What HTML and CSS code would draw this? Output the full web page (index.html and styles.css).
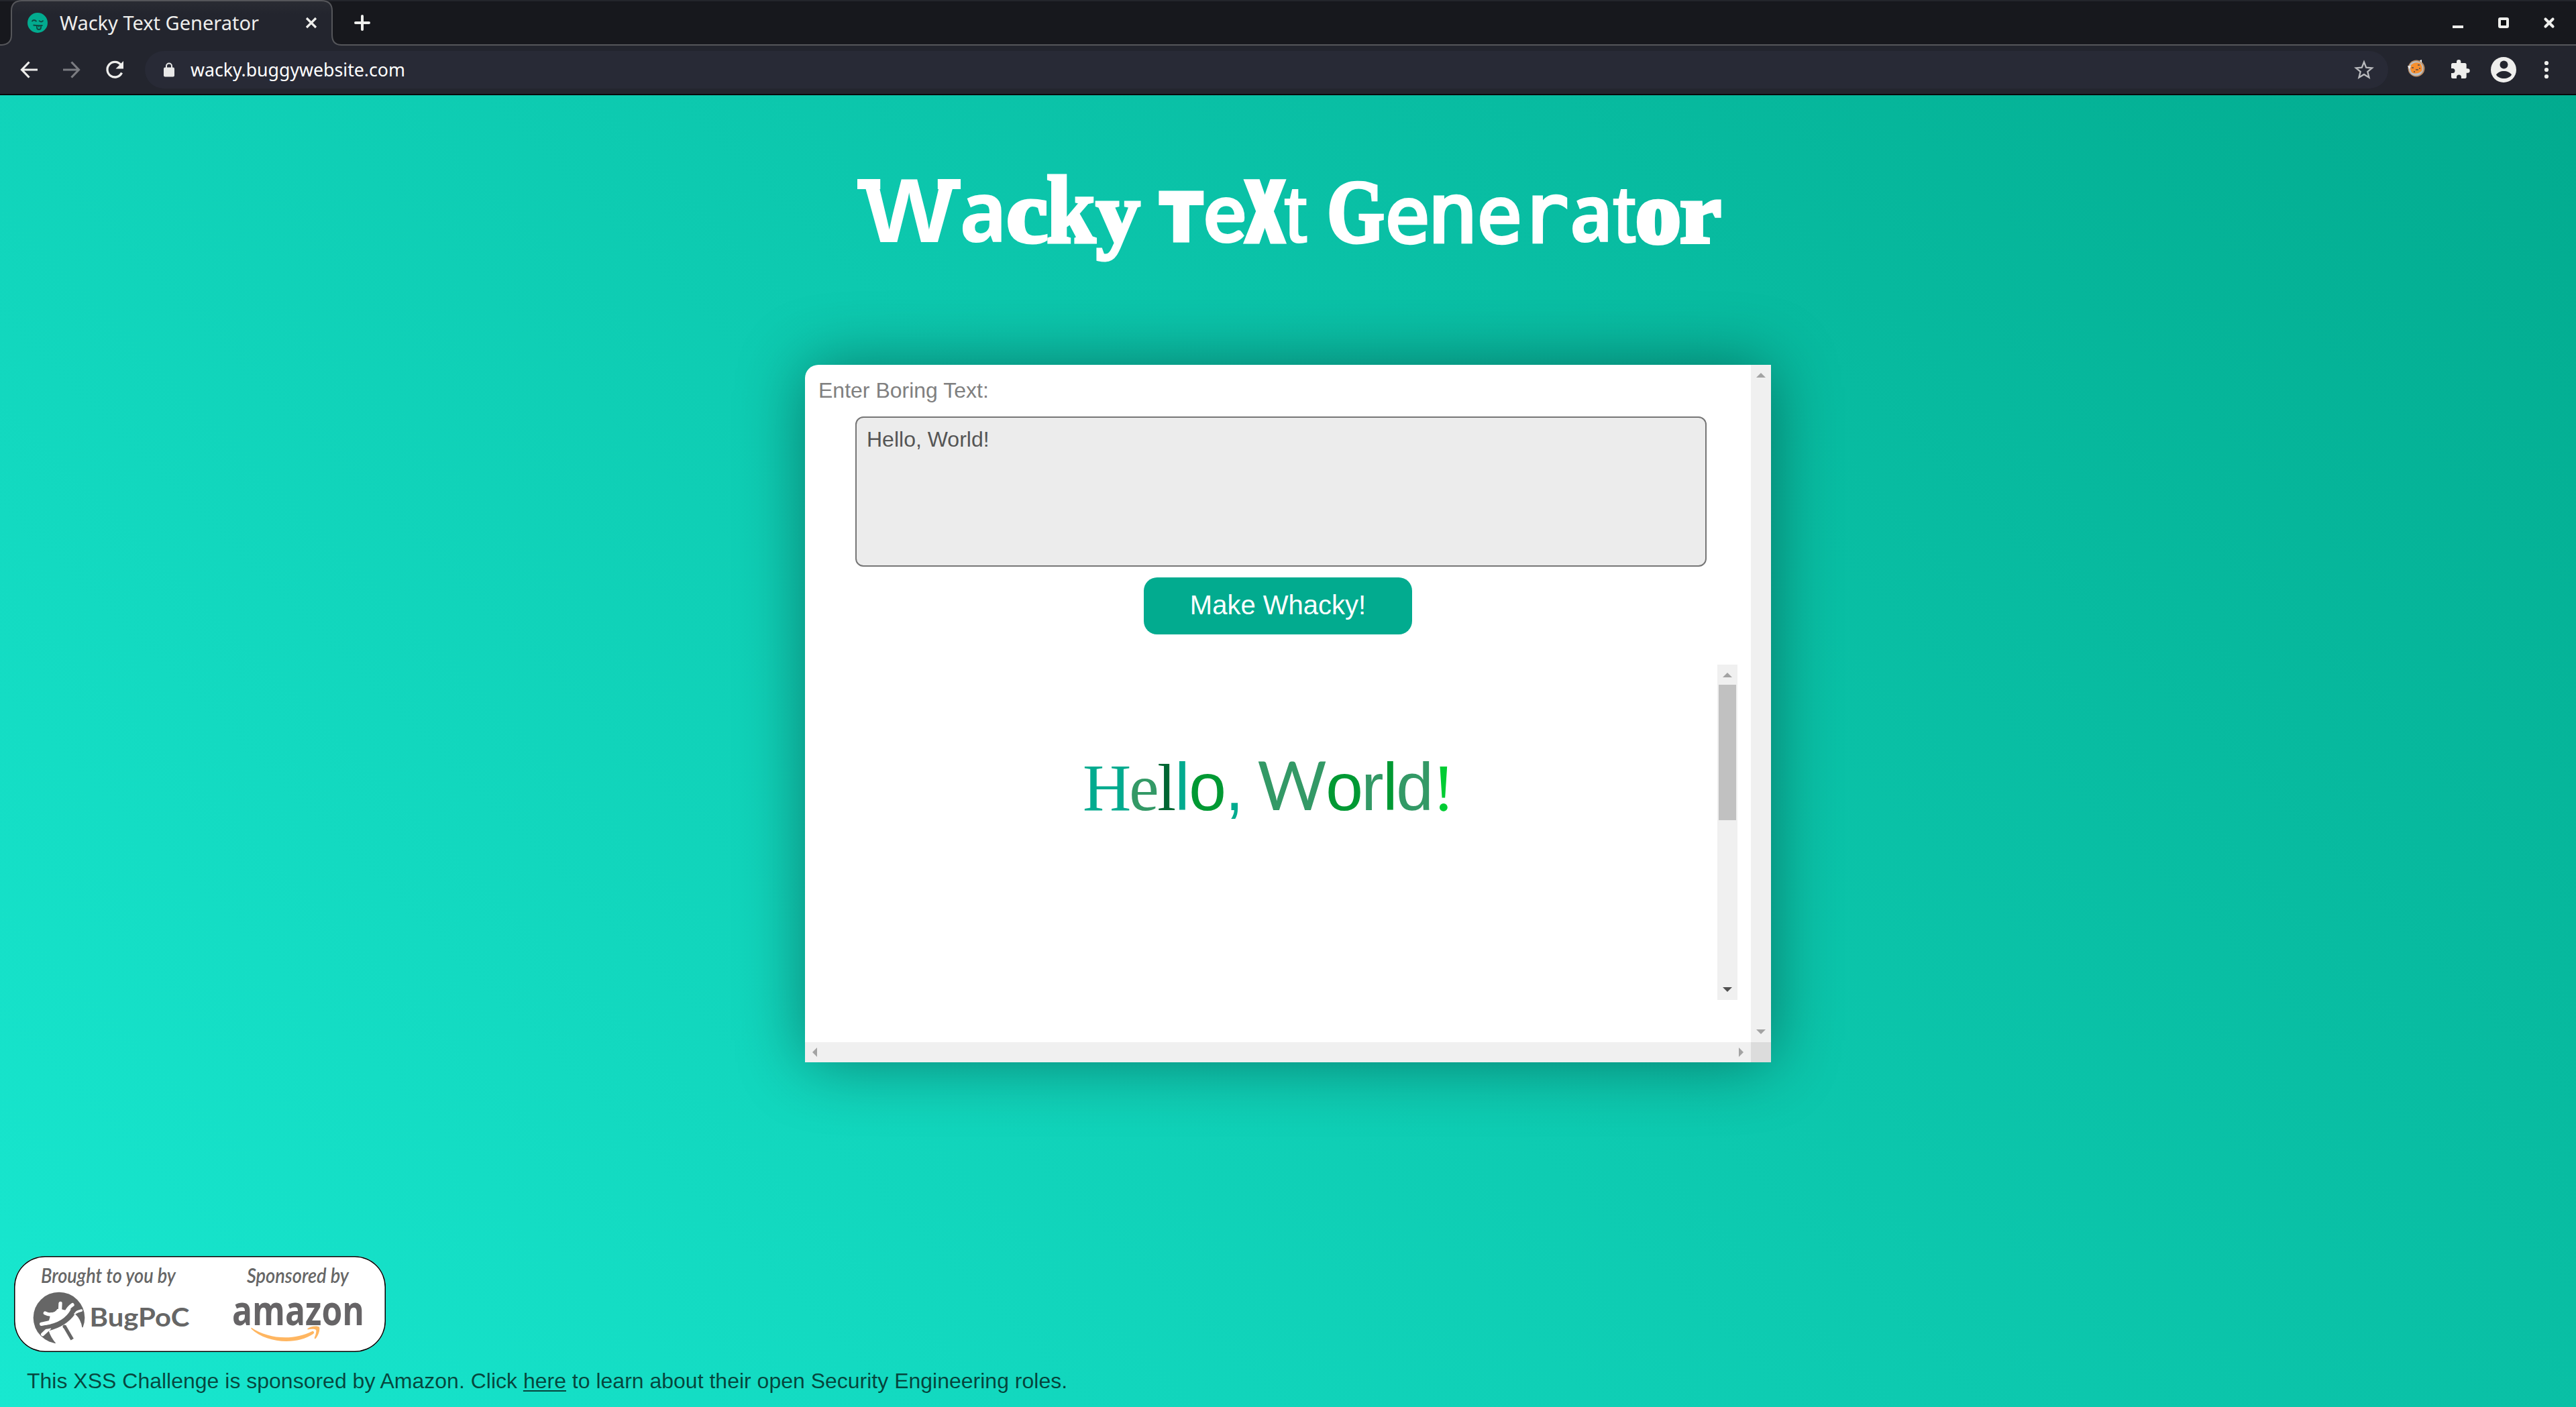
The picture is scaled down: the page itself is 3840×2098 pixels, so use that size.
FILE: index.html
```html
<!DOCTYPE html>
<html lang="en">
<head>
<meta charset="utf-8">
<title>Wacky Text Generator</title>
<link rel="stylesheet" href="styles.css">
</head>
<body>
<header class="browser">
  <div class="tabstrip">
    <svg class="tabshape" width="3840" height="68" viewBox="0 0 3840 68">
      <defs><linearGradient id="tabfill" x1="0" y1="0" x2="0" y2="1"><stop offset="0" stop-color="#2a2c33"/><stop offset=".3" stop-color="#23252e"/></linearGradient></defs>
      <path d="M0 68V67H3Q17 66 17 52V16Q17 1 33 1H479Q495 1 495 16V52Q495 67 509 67H3840V68Z" fill="url(#tabfill)"/>
      <path d="M0 67H3Q17 66 17 52V16Q17 1 33 1H479Q495 1 495 16V52Q495 67 509 67H3840" fill="none" stroke="#55565a" stroke-width="2"/>
    </svg>
    <div class="tab">
      <svg class="favicon" width="30" height="30" viewBox="0 0 30 30">
        <circle cx="15" cy="15" r="15" fill="#02ab8f"/>
        <path d="M6.5 13q3-4 7 0M17 11.500q3.500 4 6.500 0M8.500 18.500q7 1 14 .5M14 19v3q0 3 3 3t3-3v-3M17 19v2.500" fill="none" stroke="#0d4a42" stroke-width="1.800"/>
      </svg>
      <span class="tab-title">Wacky Text Generator</span>
      <svg class="tab-close" width="18" height="18" viewBox="0 0 18 18"><path d="M2 2 16 16M16 2 2 16" stroke="#eeeeec" stroke-width="3.200"/></svg>
    </div>
    <svg class="newtab" width="24" height="24" viewBox="0 0 24 24"><path d="M12 2V22M2 12H22" stroke="#eeeeec" stroke-width="4" stroke-linecap="round"/></svg>
    <svg class="winbtns" width="154" height="18" viewBox="0 0 154 18">
      <path d="M1 13H17V17H1Z" fill="#eeeeec"/>
      <rect x="71" y="3" width="12" height="12" rx="1" fill="#0c0d10" stroke="#eeeeec" stroke-width="4"/>
      <path d="M139.500 3.500 150.500 14.500M150.500 3.500 139.500 14.500" stroke="#eeeeec" stroke-width="4.200" stroke-linecap="round"/>
    </svg>
  </div>
  <div class="toolbar">
    <svg class="nav" width="160" height="32" viewBox="0 0 160 32">
      <path d="M27 16H4M14.500 4.500 3.500 16 14.500 27.500" fill="none" stroke="#eeeeec" stroke-width="3.200"/>
      <path d="M65 16H88M77.500 4.500 88.500 16 77.500 27.500" fill="none" stroke="#7b7c81" stroke-width="3.200"/>
      <path d="M152.500 20.500A11.300 11.300 0 1 1 151 8.500" fill="none" stroke="#eeeeec" stroke-width="3.300"/>
      <path d="M155 3V14.500H143.500Z" fill="#eeeeec"/>
    </svg>
    <div class="omnibox">
      <svg class="lock" width="16" height="22" viewBox="0 0 16 22"><rect y="7.500" width="16" height="14" rx="2" fill="#e8e8e8"/><path d="M4 9V5.500a4 4 0 0 1 8 0V9" fill="none" stroke="#e8e8e8" stroke-width="2"/></svg>
      <span class="url">wacky.buggywebsite.com</span>
      <svg class="star" width="30" height="30" viewBox="0 0 30 30"><path d="M15 3.500 18.200 11.600 27 12.300 20.300 17.900 22.500 26.500 15 21.900 7.500 26.500 9.700 17.900 3 12.300 11.800 11.600Z" fill="none" stroke="#b9babd" stroke-width="2.300"/></svg>
    </div>
    <svg class="cookie" width="28" height="28" viewBox="0 0 28 28">
      <circle cx="14" cy="14" r="12.500" fill="#b98b62"/><circle cx="13.500" cy="14" r="10.800" fill="#b9c0c8"/>
      <path d="M6 9Q12 3 20 6.500 24 12 22 18 14 24 7 20 4 15 6 9Z" fill="#f78f2d"/>
      <path d="M7 13h3M13 16h4M16 9h3M10 19h2M18 14h2" stroke="#7b5a44" stroke-width="2"/>
      <path d="M1 10 6 11 3 15ZM19 2l3-1v5z" fill="#f1f1f1"/>
    </svg>
    <svg class="puzzle" width="30" height="30" viewBox="0 0 30 30"><path d="M25.500 14.300H23.700V8.500A2.500 2.500 0 0 0 21.200 6H15.400V4.200A3.200 3.200 0 0 0 9 4.200V6H3.500A2.500 2.500 0 0 0 1 8.500V14H3A3.500 3.500 0 0 1 3 21H1V26.500A2.500 2.500 0 0 0 3.500 29H9V27A3.500 3.500 0 0 1 16 27V29H21.200A2.500 2.500 0 0 0 23.700 26.500V20.700H25.500A3.200 3.200 0 0 0 25.500 14.300Z" fill="#eeeeec"/></svg>
    <svg class="avatar" width="38" height="38" viewBox="0 0 38 38"><circle cx="19" cy="19" r="19" fill="#eeeeec"/><circle cx="19.500" cy="11.500" r="6" fill="#23252e"/><path d="M8 26.500C12 19 27 19 31 26.500 27 33.800 12 33.800 8 26.500Z" fill="#23252e"/></svg>
    <svg class="dots" width="8" height="28" viewBox="0 0 8 28"><g fill="#eeeeec"><circle cx="4" cy="4" r="3.100"/><circle cx="4" cy="14" r="3.100"/><circle cx="4" cy="24" r="3.100"/></g></svg>
  </div>
</header>

<main class="page">
  <h1 class="title">
    <span class="g w-cap">W</span><span class="g a1">a</span><span class="g c1">c</span><span class="g k1">k</span><span class="g y1">y</span>
    <span class="g t-cap">T</span><span class="g e1">e</span><span class="g x1">X</span><span class="g t1">t</span>
    <span class="g g-cap">G</span><span class="g e2">e</span><span class="g n1">n</span><span class="g e3">e</span><span class="g r1">r</span><span class="g a2">a</span><span class="g t2">t</span><span class="g o1">o</span><span class="g r2">r</span>
  </h1>

  <section class="card">
    <div class="content">
      <label class="label" for="boring">Enter Boring Text:</label>
      <div class="field" id="boring">Hello, World!</div>
      <button class="make">Make Whacky!</button>
      <div class="output">
        <div class="result">
          <span class="serif teal h0">H</span><span class="serif sage h1">e</span><span class="serif pine h2">l</span><span class="teal h3">l</span><span class="green h4">o</span><span class="teal h5">,</span>
          <span class="lato sage h6">W</span><span class="green h7">o</span><span class="sage h8">r</span><span class="green h9">l</span><span class="sage h10">d</span><span class="serif lime h11">!</span>
        </div>
        <div class="vbar">
          <svg width="30" height="30" viewBox="0 0 30 30"><path d="M8 19 15 12 22 19Z" fill="#a3a3a3"/></svg>
          <div class="thumb"></div>
          <svg class="end" width="30" height="30" viewBox="0 0 30 30"><path d="M8 11H22L15 18Z" fill="#505050"/></svg>
        </div>
      </div>
    </div>
    <div class="vbar">
      <svg width="30" height="30" viewBox="0 0 30 30"><path d="M8 19 15 12 22 19Z" fill="#a3a3a3"/></svg>
      <svg class="end" width="30" height="30" viewBox="0 0 30 30"><path d="M8 11H22L15 18Z" fill="#a3a3a3"/></svg>
    </div>
    <div class="hbar">
      <svg width="30" height="30" viewBox="0 0 30 30"><path d="M18 8V22L11 15Z" fill="#a3a3a3"/></svg>
      <svg width="30" height="30" viewBox="0 0 30 30"><path d="M12 8V22L19 15Z" fill="#a3a3a3"/></svg>
    </div>
    <div class="corner"></div>
  </section>

  <footer class="footer">
    <div class="badge">
      <svg width="554" height="143" viewBox="21 1873 554 143">
        <g class="script">
          <text x="61" y="1913" textLength="201" lengthAdjust="spacingAndGlyphs">Brought to you by</text>
          <text x="368" y="1913" textLength="152" lengthAdjust="spacingAndGlyphs">Sponsored by</text>
        </g>
        <g transform="translate(20 1870) scale(.33333)">
          <circle cx="204" cy="285" r="115" fill="#666"/>
          <path d="M192 402Q166 372 158 343 235 325 276 268 302 292 307 328L325 328V405Z" fill="#fff"/>
          <path d="M140 318Q166 305 164 262 188 262 196 246 212 244 226 250 240 254 258 246 225 308 140 318Z" fill="#fff"/>
          <g stroke="#fff" stroke-width="16" stroke-linecap="round" fill="none"><path d="M210 220 208 262M142 264Q158 274 185 268M264 227Q245 240 235 262M125 313Q140 310 165 304M131 359 160 332"/><path d="M304 252Q288 256 274 264" stroke-width="11"/></g>
          <path d="M131 331Q222 326 279 247" fill="none" stroke="#666" stroke-width="12"/>
          <path d="M228 322 263 382" stroke="#666" stroke-width="15"/>
          <circle cx="228" cy="324" r="7.500" fill="#666"/>
        </g>
        <text class="bugpoc" x="133.500" y="1978.300" textLength="149" lengthAdjust="spacingAndGlyphs">BugPoC</text>
        <text class="amazon" x="346" y="1976" textLength="197" lengthAdjust="spacingAndGlyphs">amazon</text>
        <path d="M374.500 1979.500C400 1997 438 1999 464.500 1985.500 467.500 1984 469.500 1987 467 1989 442 2006 397 2003 374.500 1981.500Z" fill="#ffb661"/>
        <path d="M458 1981.500C463 1977 474 1976.500 476 1979 477.500 1982 474.500 1992 470.500 1996 468.500 1997 468.500 1995.500 469 1994 471 1989 472 1984.500 471 1983 469 1981 463 1981.800 459 1982.500Z" fill="#ffb661"/>
      </svg>
    </div>
    <p class="note">This XSS Challenge is sponsored by Amazon. Click <u>here</u> to learn about their open Security Engineering roles.</p>
  </footer>
</main>
</body>
</html>
```
FILE: styles.css
```css
* { box-sizing: border-box; }
body {
  margin: 0;
  width: 3840px;
  height: 2098px;
  overflow: hidden;
  display: flex;
  flex-direction: column;
  font-family: "Liberation Sans", Arial, sans-serif;
  font-size: 32px;
  line-height: 37px;
}
svg { display: block; flex: none; overflow: visible; }

/* browser chrome */
.browser { height: 142px; border-bottom: 2px solid #08090b; background: #23252e; font-family: "Noto Sans", sans-serif; }
.tabstrip { position: relative; height: 68px; display: flex; align-items: flex-start; background: #17181d; border-top: 2px solid #23252b; }
.tabshape { position: absolute; left: 0; top: -2px; }
.tab { position: relative; width: 478px; margin-left: 17px; padding: 17px 22px 0 24px; display: flex; }
.tab-title { margin-left: 18px; font-size: 29px; line-height: 30px; color: #eeeeec; white-space: nowrap; }
.tab-close { margin: 6px 0 0 auto; }
.newtab { margin: 20px 0 0 33px; position: relative; }
.winbtns { margin: 23px 31px 0 auto; position: relative; }
.toolbar { height: 72px; display: flex; align-items: center; }
.nav { margin-left: 29px; }
.omnibox { margin-left: 27px; width: 3344px; flex: none; height: 56px; border-radius: 28px; background: #282a36; display: flex; align-items: center; padding: 0 21px 0 28px; }
.url { margin-left: 24px; font-size: 26.7px; line-height: 36px; color: #fff; }
.star { margin-left: auto; }
.cookie { margin: 0 0 4px 28px; }
.puzzle { margin: 0 0 2px 37px; }
.avatar { margin-left: 30px; }
.dots { margin-left: 41px; }

/* page */
.page { flex: 1; display: flex; flex-direction: column; background: linear-gradient(45deg, #18e8d0, #02ab8f); }
.title { margin: 101px 0 0; padding-left: 1278px; height: 301px; display: flex; align-items: baseline; align-self: flex-start; color: #fff; font-weight: 700; line-height: 1; }
.g { display: block; white-space: nowrap; transform-origin: 0 0; line-height: 1; -webkit-text-stroke: 0 #fff; }
.w-cap { position: relative; width: 157.4px; font-size: 136px; text-indent: 8px; transform: scaleX(1.07); }
.w-cap::before, .w-cap::after { content: ""; position: absolute; top: 21px; width: 32px; height: 15px; background: #fff; left: 0; }
.w-cap::after { left: 112px; }
.a1 { width: 65.4px; font: 700 127px/1 "Noto Sans", sans-serif; text-indent: -5px; transform: scaleX(.93); }
.c1, .k1, .y1, .g-cap, .o1, .r2 { font-family: "Liberation Serif", serif; font-weight: 700; -webkit-text-stroke-width: 5px; }
.c1 { width: 59px; font-size: 131px; text-indent: -1px; transform: scaleX(1.07); }
.k1 { width: 72px; font-size: 141px; text-indent: 0; transform: scaleX(.93); }
.y1 { width: 95px; font-size: 128px; text-indent: 2px; transform: scaleX(1.02); }
.t-cap { width: 69.9px; font: 700 95px/1 "DejaVu Sans", sans-serif; -webkit-text-stroke-width: 8px; text-indent: 4px; transform: translateY(-3px) scaleX(.93); }
.e1 { width: 58.5px; font: 700 127px/1 Lato, sans-serif; -webkit-text-stroke-width: 2px; text-indent: -3px; transform: scaleX(.94); }
.x1 { width: 58.6px; font: 900 122px/1 Roboto, sans-serif; -webkit-text-stroke-width: 9px; text-indent: 4.5px; transform: translateY(-2px) scaleX(.7); }
.t1, .t2 { font-weight: 400; font-size: 121px; -webkit-text-stroke-width: 2px; text-indent: 0; transform: scaleX(1.02); }
.t1 { width: 66.7px; }
.g-cap { width: 87.2px; font-size: 134px; text-indent: -2px; transform: scaleX(.82); }
.e2, .n1, .e3, .r1 { font-family: "DejaVu Sans Mono", monospace; font-weight: 400; -webkit-text-stroke-width: 4.5px; }
.e2 { width: 68.5px; font-size: 114px; text-indent: -3.700px; transform: scaleX(.98); }
.n1 { width: 68.6px; font-size: 123px; text-indent: -8.500px; transform: scaleX(1.03); }
.e3 { width: 78.4px; font-size: 115px; text-indent: -3.700px; transform: scaleX(.98); }
.r1 { width: 60.6px; font-size: 123px; text-indent: -18px; transform: scaleX(.99); }
.a2 { width: 60px; font: 700 120px/1 "Noto Sans", sans-serif; text-indent: -4.800px; transform: scaleX(.9); }
.t2 { width: 35.500px; }
.o1 { width: 64.500px; font-size: 128px; -webkit-text-stroke-width: 8px; text-indent: 0; transform: scaleX(1.025); }
.r2 { width: 62.600px; font-size: 128px; -webkit-text-stroke-width: 6px; text-indent: .4px; transform: scaleX(1.07); }

/* card */
.card { margin-left: 1200px; width: 1440px; height: 1040px; display: grid; grid-template: 1010px 30px / 1410px 30px; background: #fff; border-top-left-radius: 20px; box-shadow: 0 0 100px rgba(0, 0, 0, .4); }
.content { padding: 20px; display: flex; flex-direction: column; }
.label { color: #808080; }
.field { margin: 20px 0 0 55px; width: 1269px; height: 224px; padding: 14px 15px; border: 2px solid #767676; border-radius: 12px; background: #ececec; color: #555; }
.make { margin-top: 16px; align-self: center; width: 400px; height: 85px; padding: 0 0 3px; border: 0; border-radius: 20px; background: #02ab8f; color: #fff; font: 40px/1 "Liberation Sans", sans-serif; }
.output { margin-top: 45px; height: 500px; display: flex; justify-content: space-between; }
.vbar { width: 30px; background: #f0f0f0; display: flex; flex-direction: column; }
.end { margin-top: auto; }
.thumb { width: 26px; height: 202px; margin-left: 2px; background: #c1c1c1; }
.hbar { background: #f0f0f0; display: flex; justify-content: space-between; }
.corner { background: #dcdcdc; }
.result { padding: 128px 0 0 394px; display: flex; align-items: baseline; font-size: 100px; line-height: 1; }
.result span { display: block; white-space: nowrap; line-height: 1; }
.serif { font-family: "Liberation Serif", serif; }
.lato { font-family: Lato, sans-serif; }
.teal { color: #02ab8f; }
.sage { color: #396; }
.pine { color: #063; }
.green { color: #093; }
.lime { color: #0c3; }
.h0 { width: 69.3px; }
.h1 { width: 42px; }
.h2 { width: 26px; }
.h3 { width: 21px; }
.h4 { width: 54px; }
.h5 { width: 48px; }
.h6 { width: 102px; }
.h7 { width: 53px; }
.h8 { width: 32px; }
.h9 { width: 20px; }
.h10 { width: 54px; }
.h11 { width: 33px; }

/* footer */
.footer { margin-top: auto; padding-bottom: 20px; }
.badge { margin-left: 21px; width: 554px; height: 143px; border-radius: 46px; background: #fff; box-shadow: inset 0 0 0 1.500px #000; }
.script { font: italic 600 31px Lato, sans-serif; fill: #666; }
.bugpoc { font: 700 39px Lato, sans-serif; fill: #666; }
.amazon { font: 700 60px "Open Sans", sans-serif; fill: #666466; }
.note { margin: 25px 0 0 40px; color: rgba(0, 0, 0, .7); }
.note u { text-underline-offset: 3px; text-decoration-thickness: 2px; }
```
